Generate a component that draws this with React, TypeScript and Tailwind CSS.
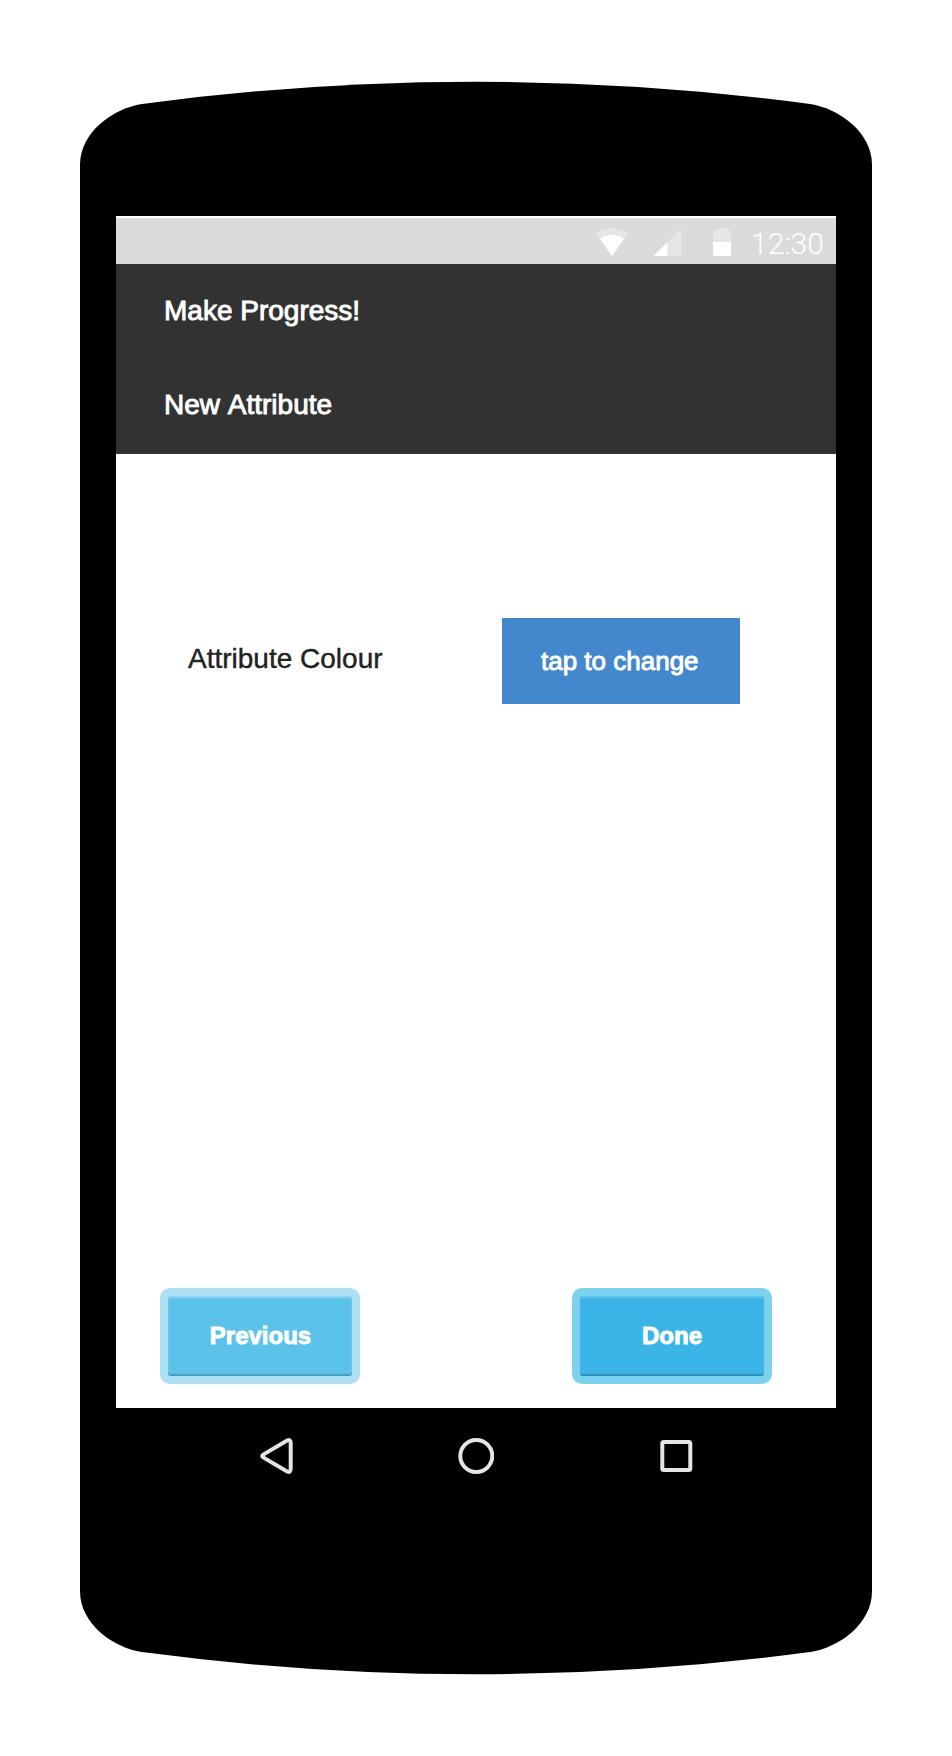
import React from "react";

function FrameCap({ flipped = false }: { flipped?: boolean }) {
  return (
    <svg
      width="792"
      height="135"
      viewBox="0 0 792 135"
      className={flipped ? "block -scale-y-100" : "block"}
      aria-hidden="true"
    >
      <path d="M0 135V83.500C0 52 32 27.500 62 22.900Q396 -21.500 730 22.900C760 27.500 792 52 792 83.500V135Z" fill="#000" />
    </svg>
  );
}

function StatusBar() {
  return (
    <div className="mt-0.5 flex h-[46px] items-start bg-[#dbdbdb]">
      <svg width="32" height="28" viewBox="0 0 32 28" className="mt-[10px] ml-[480px] block">
        <path d="M0 5.500Q16 -5.500 32 5.500L16 28Z" fill="#e6e6e6" />
        <path d="M4 10.700Q16 3 28 10.700L16 28Z" fill="#fff" />
      </svg>
      <svg width="28" height="28" viewBox="0 0 28 28" className="mt-[10px] ml-[25px] block">
        <path d="M0.500 28L28 0.500V28Z" fill="#e6e6e6" />
        <path d="M0.500 28L14.300 14.200V28Z" fill="#fff" />
      </svg>
      <svg width="18" height="28" viewBox="0 0 18 28" className="mt-[10px] ml-8 block">
        <path d="M0 14V4Q0 2 2 2H4.500V0H14V2H16Q18 2 18 4V14Z" fill="#e6e6e6" />
        <path d="M0 14H18V26Q18 28 16 28H2Q0 28 0 26Z" fill="#fff" />
      </svg>
      <span className="mt-[11px] ml-5 font-[Roboto,sans-serif] text-[30px] leading-[30px] font-light text-white">
        12:30
      </span>
    </div>
  );
}

function Header() {
  return (
    <header className="flex h-[190px] flex-col gap-[62px] bg-[#323232] pt-[31px] pl-12 text-[28px] leading-8 text-white [font-kerning:none] [-webkit-text-stroke:0.9px_white]">
      <div>Make Progress!</div>
      <div>New Attribute</div>
    </header>
  );
}

function NavButton({ label, tone }: { label: string; tone: string }) {
  return (
    <button
      className={`flex h-24 w-[200px] items-center justify-center rounded-[10px] border-8 text-2xl font-bold text-white [-webkit-text-stroke:0.9px_white] ${tone}`}
    >
      {label}
    </button>
  );
}

export default function App() {
  return (
    <div className="flex h-[1756px] w-[952px] flex-col items-center bg-white pt-[81px] font-['Liberation_Sans',Arial,sans-serif]">
      <FrameCap />
      <div className="w-[792px] bg-black px-9">
        <main className="flex h-[1192px] flex-col bg-white">
          <StatusBar />
          <Header />
          <section className="mt-[164px] flex h-[86px] pl-[72px]">
            <span className="w-[314px] pt-[25px] text-[28px] leading-8 text-[#212121] [-webkit-text-stroke:0.4px_#212121]">
              Attribute Colour
            </span>
            <button className="flex h-[86px] w-[238px] bg-[#4387cc] pt-7 pl-[39px] text-[26px] leading-[30px] text-white [-webkit-text-stroke:0.9px_white]">
              tap to change
            </button>
          </section>
          <footer className="mt-auto mb-6 flex gap-[212px] pl-11">
            <NavButton
              label="Previous"
              tone="border-[#ade2f5] bg-[#5bc2e9] pl-px shadow-[inset_0_-2px_1px_#4a9fc0,inset_0_2px_2px_#8fd5f0,inset_0_0_2px_#7dcdec]"
            />
            <NavButton
              label="Done"
              tone="border-[#7dd0ee] bg-[#3bb5e7] shadow-[inset_0_-2px_1px_#2e8fb6,inset_0_2px_2px_#62c4eb,inset_0_0_2px_#55bfe9]"
            />
          </footer>
        </main>
        <nav className="flex h-[132px] items-start pt-[30px] pl-36">
          <svg width="33" height="36" viewBox="0 0 33 36" fill="none" stroke="#e5e5e5" strokeWidth="4">
            <path d="M3.200 16.600L27.500 2.300Q30.500 1.200 30.700 5V31Q30.500 34.800 27.500 33.700L3.200 19.400Q1.200 18 3.200 16.600Z" />
          </svg>
          <svg width="36" height="36" viewBox="0 0 36 36" className="ml-[165px]" fill="none" stroke="#e5e5e5" strokeWidth="4">
            <circle cx="18.300" cy="18" r="16" />
          </svg>
          <svg width="33" height="32" viewBox="0 0 33 32" className="mt-0.5 ml-[166px]" fill="none" stroke="#e5e5e5" strokeWidth="4">
            <rect x="2.300" y="2" width="28" height="28" rx="1.500" />
          </svg>
        </nav>
      </div>
      <FrameCap flipped />
    </div>
  );
}
